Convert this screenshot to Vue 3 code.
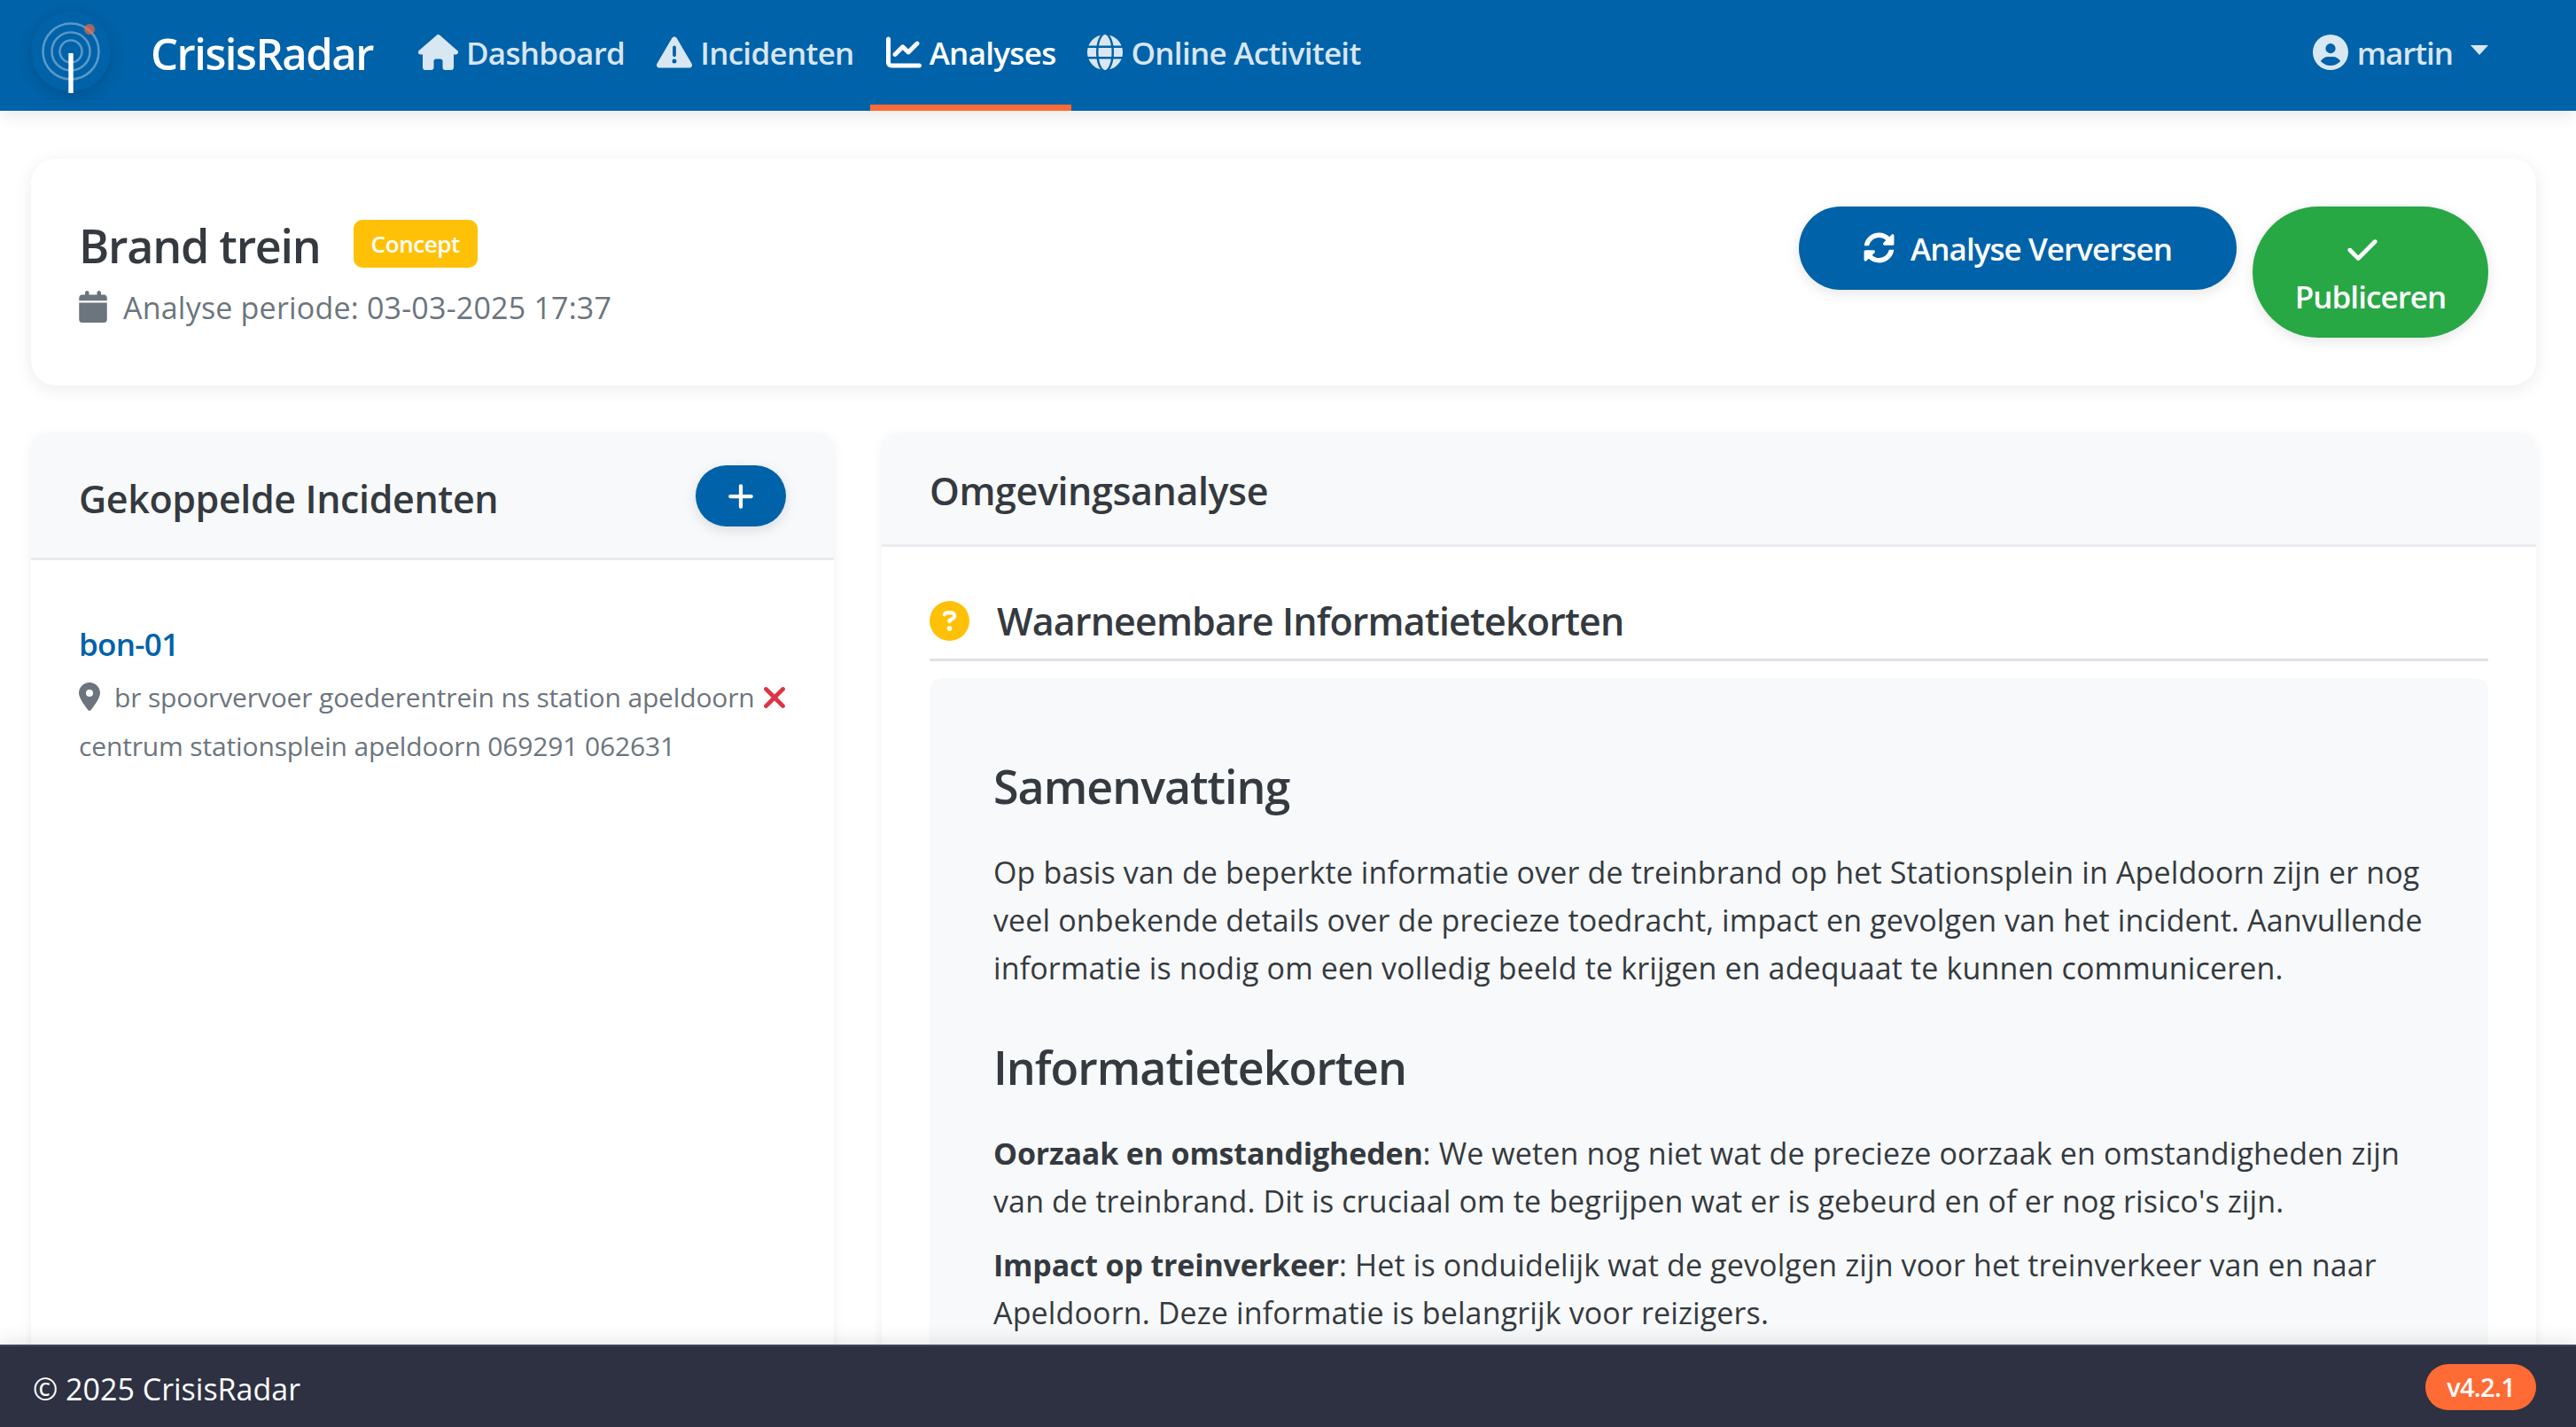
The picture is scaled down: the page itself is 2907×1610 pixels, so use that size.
<template>
  <div class="app">
    <!-- Navbar -->
    <header class="navbar">
      <svg class="logo" viewBox="0 0 90 90">
        <circle cx="45" cy="45" r="45" fill="#0062a8" />
        <circle cx="45" cy="45" r="31.5" class="ring" />
        <circle cx="45" cy="45" r="21.5" class="ring" />
        <circle cx="45" cy="45" r="12.5" class="ring" />
        <circle cx="66" cy="20" r="6" fill="#ff6b35" opacity="0.65" />
        <rect x="42.3" y="47" width="5.4" height="45" fill="#fff" />
      </svg>
      <span class="brand">CrisisRadar</span>
      <nav class="nav-links">
        <a
          v-for="item in navItems"
          :key="item.label"
          class="nav-link"
          :class="{ active: item.active }"
        >
          <svg class="nav-icon" :viewBox="item.box"><path :d="item.d" /></svg>
          {{ item.label }}
        </a>
      </nav>
      <div class="user">
        <svg class="user-icon" viewBox="0 0 512 512"><path :d="icons.user" /></svg>
        <span>martin</span>
        <span class="caret"></span>
      </div>
    </header>

    <main class="content">
      <!-- Analyse header -->
      <section class="head-card">
        <div>
          <div class="title-row">
            <h1 class="page-title">Brand trein</h1>
            <span class="badge">Concept</span>
          </div>
          <div class="period">
            <svg class="cal-icon" viewBox="0 0 448 512"><path :d="icons.calendar" /></svg>
            <span>Analyse periode: 03-03-2025 17:37</span>
          </div>
        </div>
        <div class="actions">
          <button class="btn btn-blue">
            <svg class="sync-icon" viewBox="0 0 512 512"><path :d="icons.sync" /></svg>
            Analyse Verversen
          </button>
          <button class="btn btn-green">
            <svg class="check-icon" viewBox="0 0 448 512"><path :d="icons.check" /></svg>
            <span>Publiceren</span>
          </button>
        </div>
      </section>

      <div class="columns">
        <!-- Incidenten -->
        <section class="card">
          <div class="card-head left-head">
            <h2 class="card-title">Gekoppelde Incidenten</h2>
            <button class="add-btn">
              <svg viewBox="0 0 448 512"><path :d="icons.plus" /></svg>
            </button>
          </div>
          <div class="incident">
            <a class="incident-link">bon-01</a>
            <div class="incident-line">
              <svg class="pin-icon" viewBox="0 0 384 512"><path :d="icons.pin" /></svg>
              <span>br spoorvervoer goederentrein ns station apeldoorn</span>
              <svg class="x-icon" viewBox="32 96 320 320"><path :d="icons.xmark" /></svg>
            </div>
            <div class="incident-line">
              <span>centrum stationsplein apeldoorn 069291 062631</span>
            </div>
          </div>
        </section>

        <!-- Omgevingsanalyse -->
        <section class="card">
          <div class="card-head right-head">
            <h2 class="card-title">Omgevingsanalyse</h2>
          </div>
          <div class="analysis">
            <div class="section-title">
              <svg class="q-icon" viewBox="0 0 512 512"><path :d="icons.question" /></svg>
              <h3>Waarneembare Informatietekorten</h3>
            </div>
            <div class="report">
              <h4>Samenvatting</h4>
              <p>
                Op basis van de beperkte informatie over de treinbrand op het Stationsplein in Apeldoorn zijn er nog
                veel onbekende details over de precieze toedracht, impact en gevolgen van het incident. Aanvullende
                informatie is nodig om een volledig beeld te krijgen en adequaat te kunnen communiceren.
              </p>
              <h4 class="second">Informatietekorten</h4>
              <p v-for="gap in gaps" :key="gap.title" class="gap">
                <strong>{{ gap.title }}</strong><span>: {{ gap.first }}</span><br />
                <span>{{ gap.rest }}</span>
              </p>
            </div>
          </div>
        </section>
      </div>
    </main>

    <footer class="footer">
      <span>© 2025 CrisisRadar</span>
      <span class="version">v4.2.1</span>
    </footer>
  </div>
</template>

<script setup>
  const icons = {
    house: 'M575.8 255.5c0 18-15 32.1-32 32.1h-32l.7 160.2c0 2.7-.2 5.4-.5 8.1V472c0 22.1-17.9 40-40 40H456c-1.1 0-2.2 0-3.3-.1c-1.4 .1-2.8 .1-4.2 .1H416 392c-22.1 0-40-17.9-40-40V448 384c0-17.7-14.3-32-32-32H256c-17.7 0-32 14.3-32 32v64 24c0 22.1-17.9 40-40 40H160 128.1c-1.5 0-3-.1-4.5-.2c-1.2 .1-2.4 .2-3.6 .2H104c-22.1 0-40-17.9-40-40V360c0-.9 0-1.9 .1-2.8V287.6H32c-18 0-32-14-32-32.1c0-9 3-17 10-24L266.4 8c7-7 15-8 22-8s15 2 21 7L564.8 231.5c8 7 12 15 11 24z',
    warning: 'M256 32c14.2 0 27.3 7.5 34.5 19.8l216 368c7.3 12.4 7.3 27.7 .2 40.1S486.3 480 472 480H40c-14.3 0-27.6-7.7-34.7-20.1s-7-27.8 .2-40.1l216-368C228.7 39.5 241.8 32 256 32zm0 128c-13.3 0-24 10.7-24 24V296c0 13.3 10.7 24 24 24s24-10.7 24-24V184c0-13.3-10.7-24-24-24zm32 224a32 32 0 1 0 -64 0 32 32 0 1 0 64 0z',
    chart: 'M64 64c0-17.7-14.3-32-32-32S0 46.3 0 64V400c0 44.2 35.8 80 80 80H480c17.7 0 32-14.3 32-32s-14.3-32-32-32H80c-8.8 0-16-7.2-16-16V64zm406.6 86.6c12.5-12.5 12.5-32.8 0-45.3s-32.8-12.5-45.3 0L320 210.7l-57.4-57.4c-12.5-12.5-32.8-12.5-45.3 0l-112 112c-12.5 12.5-12.5 32.8 0 45.3s32.8 12.5 45.3 0L240 221.3l57.4 57.4c12.5 12.5 32.8 12.5 45.3 0l128-128z',
    globe: 'M352 256c0 22.2-1.2 43.6-3.3 64H163.3c-2.2-20.4-3.3-41.8-3.3-64s1.2-43.6 3.3-64H348.7c2.2 20.4 3.3 41.8 3.3 64zm28.8-64H503.9c5.3 20.5 8.1 41.9 8.1 64s-2.8 43.5-8.1 64H380.8c2.1-20.6 3.2-42 3.2-64s-1.1-43.4-3.2-64zm112.6-32H376.7c-10-63.9-29.8-117.4-55.3-151.6c78.3 20.7 142 77.5 171.9 151.6zm-149.1 0H167.7c6.1-36.4 15.5-68.6 27-94.7c10.5-23.6 22.2-40.7 33.5-51.5C239.4 3.2 248.7 0 256 0s16.6 3.2 27.8 13.8c11.3 10.8 23 27.9 33.5 51.5c11.6 26 20.9 58.2 27 94.7zm-209 0H18.6C48.6 85.9 112.2 29.1 190.6 8.4C165.1 42.6 145.3 96.1 135.3 160zM8.1 192H131.2c-2.1 20.6-3.2 42-3.2 64s1.1 43.4 3.2 64H8.1C2.8 299.5 0 278.1 0 256s2.8-43.5 8.1-64zM194.7 446.6c-11.6-26-20.9-58.2-27-94.6H344.3c-6.1 36.4-15.5 68.6-27 94.6c-10.5 23.6-22.2 40.7-33.5 51.5C272.6 508.8 263.3 512 256 512s-16.6-3.2-27.8-13.8c-11.3-10.8-23-27.9-33.5-51.5zM135.3 352c10 63.9 29.8 117.4 55.3 151.6C112.2 482.9 48.6 426.1 18.6 352H135.3zm358.1 0c-30 74.1-93.6 130.9-171.9 151.6c25.5-34.2 45.2-87.7 55.3-151.6H493.4z',
    user: 'M399 384.2C376.9 345.8 335.4 320 288 320H224c-47.4 0-88.9 25.8-111 64.2c35.2 39.2 86.2 63.8 143 63.8s107.8-24.7 143-63.8zM0 256a256 256 0 1 1 512 0A256 256 0 1 1 0 256zm256 16a72 72 0 1 0 0-144 72 72 0 1 0 0 144z',
    calendar: 'M96 32V64H48C21.5 64 0 85.5 0 112v48H448V112c0-26.5-21.5-48-48-48H352V32c0-17.7-14.3-32-32-32s-32 14.3-32 32V64H160V32c0-17.7-14.3-32-32-32S96 14.3 96 32zM448 192H0V464c0 26.5 21.5 48 48 48H400c26.5 0 48-21.5 48-48V192z',
    sync: 'M370.72 133.28C339.458 104.008 298.888 87.962 255.848 88c-77.458.068-144.328 53.178-162.791 126.85-1.344 5.363-6.122 9.15-11.651 9.15H24.103c-7.498 0-13.194-6.807-11.807-14.176C33.933 94.924 134.813 8 256 8c66.448 0 126.791 26.136 171.315 68.685L463.03 40.97C478.149 25.851 504 36.559 504 57.941V192c0 13.255-10.745 24-24 24H345.941c-21.382 0-32.09-25.851-16.971-40.971l41.75-41.749zM32 296h134.059c21.382 0 32.09 25.851 16.971 40.971l-41.75 41.75c31.262 29.273 71.835 45.319 114.876 45.28 77.418-.07 144.315-53.144 162.787-126.849 1.344-5.363 6.122-9.15 11.651-9.15h57.304c7.498 0 13.194 6.807 11.807 14.176C478.067 417.076 377.187 504 256 504c-66.448 0-126.791-26.136-171.315-68.685L48.97 471.03C33.851 486.149 8 475.441 8 454.059V320c0-13.255 10.745-24 24-24z',
    check: 'M438.6 105.4c12.5 12.5 12.5 32.8 0 45.3l-256 256c-12.5 12.5-32.8 12.5-45.3 0l-128-128c-12.5-12.5-12.5-32.8 0-45.3s32.8-12.5 45.3 0L160 338.7 393.4 105.4c12.5-12.5 32.8-12.5 45.3 0z',
    plus: 'M256 80c0-17.7-14.3-32-32-32s-32 14.3-32 32V224H48c-17.7 0-32 14.3-32 32s14.3 32 32 32H192V432c0 17.7 14.3 32 32 32s32-14.3 32-32V288H400c17.7 0 32-14.3 32-32s-14.3-32-32-32H256V80z',
    xmark: 'M342.6 150.6c12.5-12.5 12.5-32.8 0-45.3s-32.8-12.5-45.3 0L192 210.7 86.6 105.4c-12.5-12.5-32.8-12.5-45.3 0s-12.5 32.8 0 45.3L146.7 256 41.4 361.4c-12.5 12.5-12.5 32.8 0 45.3s32.8 12.5 45.3 0L192 301.3 297.4 406.6c12.5 12.5 32.8 12.5 45.3 0s12.5-32.8 0-45.3L237.3 256 342.6 150.6z',
    pin: 'M215.7 499.2C267 435 384 279.4 384 192C384 86 298 0 192 0S0 86 0 192c0 87.4 117 243 168.3 307.2c12.3 15.3 35.1 15.3 47.4 0zM192 256a64 64 0 1 1 0-128 64 64 0 1 1 0 128z',
    question: 'M256 512A256 256 0 1 0 256 0a256 256 0 1 0 0 512zM169.8 165.3c7.9-22.3 29.1-37.3 52.8-37.3h58.3c34.9 0 63.1 28.3 63.1 63.1c0 22.6-12.1 43.5-31.7 54.8L280 264.4c-.2 13-10.9 23.6-24 23.6c-13.3 0-24-10.7-24-24V250.5c0-8.6 4.6-16.5 12.1-20.8l44.3-25.4c4.7-2.7 7.6-7.7 7.6-13.1c0-8.4-6.8-15.1-15.1-15.1H222.6c-3.4 0-6.4 2.1-7.5 5.3l-.4 1.2c-4.4 12.5-18.2 19-30.6 14.6s-19-18.2-14.6-30.6l.4-1.2zM224 352a32 32 0 1 1 64 0 32 32 0 1 1 -64 0z'
  }

  const navItems = [
    { label: 'Dashboard', d: icons.house, box: '0 0 576 512' },
    { label: 'Incidenten', d: icons.warning, box: '0 0 512 512' },
    { label: 'Analyses', d: icons.chart, box: '0 0 512 512', active: true },
    { label: 'Online Activiteit', d: icons.globe, box: '0 0 512 512' }
  ]

  const gaps = [
    {
      title: 'Oorzaak en omstandigheden',
      first: 'We weten nog niet wat de precieze oorzaak en omstandigheden zijn',
      rest: "van de treinbrand. Dit is cruciaal om te begrijpen wat er is gebeurd en of er nog risico's zijn."
    },
    {
      title: 'Impact op treinverkeer',
      first: 'Het is onduidelijk wat de gevolgen zijn voor het treinverkeer van en naar',
      rest: 'Apeldoorn. Deze informatie is belangrijk voor reizigers.'
    }
  ]
</script>

<style>
  html, body {
    margin: 0;
    background: #fff;
  }
</style>

<style scoped>
  .app {
    display: flex;
    flex-direction: column;
    height: 100vh;
    overflow: hidden;
    font-family: 'Open Sans', 'Liberation Sans', sans-serif;
    letter-spacing: -0.025em;
    color: #343a40;
  }

  /* Navbar */
  .navbar {
    position: relative;
    z-index: 2;
    flex: none;
    display: flex;
    align-items: center;
    height: 125px;
    padding: 0 99px 0 35px;
    background: #0062a8;
    box-shadow: 0 4px 20px rgba(0, 0, 0, 0.1);
  }
  .logo {
    width: 90px;
    height: 90px;
    flex: none;
    overflow: visible;
    filter: drop-shadow(0 5px 8px rgba(0, 0, 0, 0.15));
    margin-top: -9px;
  }
  .ring {
    fill: none;
    stroke: rgba(255, 255, 255, 0.35);
    stroke-width: 2.6;
  }
  .brand {
    margin: -6px 33px 0 45px;
    font-size: 49px;
    font-weight: 600;
    letter-spacing: -0.03em;
    color: #fff;
  }
  .nav-links {
    display: flex;
    align-self: stretch;
    flex: 1;
  }
  .nav-link {
    display: flex;
    align-items: center;
    gap: 9px;
    padding: 0 18px;
    font-size: 35px;
    font-weight: 600;
    letter-spacing: -0.02em;
    color: rgba(255, 255, 255, 0.85);
    border-bottom: 7px solid transparent;
  }
  .nav-link.active {
    color: #fff;
    border-bottom-color: #ff6b35;
  }
  .nav-icon {
    height: 40px;
    fill: currentColor;
  }
  .user {
    display: flex;
    align-items: center;
    gap: 10px;
    margin-bottom: 7px;
    font-size: 35px;
    font-weight: 600;
    letter-spacing: -0.03em;
    color: rgba(255, 255, 255, 0.85);
  }
  .user-icon {
    width: 40px;
    height: 40px;
    fill: currentColor;
  }
  .caret {
    margin-left: 10px;
    margin-top: -6px;
    border-top: 11px solid currentColor;
    border-left: 10px solid transparent;
    border-right: 10px solid transparent;
  }

  /* Page */
  .content {
    flex: 1;
    min-height: 0;
    overflow: hidden;
    padding: 54px 45px 0 35px;
  }
  .head-card {
    display: flex;
    justify-content: space-between;
    align-items: flex-start;
    height: 256px;
    box-sizing: border-box;
    padding: 54px 54px 0 54px;
    background: #fff;
    border-radius: 28px;
    box-shadow: 0 4px 20px rgba(0, 0, 0, 0.08);
  }
  .title-row {
    display: flex;
    align-items: center;
    gap: 37px;
    padding-top: 6px;
  }
  .page-title {
    margin: 0;
    font-size: 52px;
    font-weight: 600;
    line-height: 76px;
    letter-spacing: -0.024em;
    color: #343a40;
  }
  .badge {
    padding: 0 20px;
    line-height: 54px;
    font-size: 26px;
    font-weight: 600;
    color: #fff;
    background: #ffc107;
    border-radius: 10px;
    margin-top: -4px;
  }
  .period {
    display: flex;
    align-items: center;
    gap: 18px;
    margin-top: 9px;
    font-size: 34px;
    letter-spacing: 0.006em;
    color: #6c757d;
  }
  .cal-icon {
    width: 32px;
    height: 36px;
    fill: currentColor;
    margin-top: -2px;
  }
  .actions {
    display: flex;
    align-items: flex-start;
    gap: 18px;
  }
  .btn {
    border: 0;
    border-radius: 999px;
    font-family: inherit;
    font-size: 35px;
    font-weight: 600;
    letter-spacing: -0.027em;
    color: #fff;
    box-shadow: 0 4px 15px rgba(0, 0, 0, 0.1);
  }
  .btn-blue {
    display: flex;
    align-items: center;
    justify-content: center;
    gap: 18px;
    width: 494px;
    height: 94px;
    padding-top: 2px;
    background: #0062a8;
  }
  .sync-icon {
    width: 35px;
    height: 35px;
    fill: #fff;
    margin-top: -2px;
  }
  .btn-green {
    display: flex;
    flex-direction: column;
    align-items: center;
    width: 266px;
    height: 148px;
    padding-top: 30px;
    background: #28a745;
  }
  .check-icon {
    width: 38px;
    height: 38px;
    fill: #fff;
    margin: 0 18px 10px 0;
  }

  .columns {
    display: grid;
    grid-template-columns: 906px 1fr;
    gap: 54px;
    margin-top: 54px;
  }
  .card {
    background: #fff;
    border-radius: 18px 18px 0 0;
    box-shadow: 0 2px 14px rgba(0, 0, 0, 0.06);
    min-height: 1200px;
  }
  .card-head {
    display: flex;
    align-items: center;
    justify-content: space-between;
    box-sizing: border-box;
    padding: 0 54px;
    background: #f8f9fa;
    border-bottom: 3px solid #e9ecef;
    border-radius: 18px 18px 0 0;
  }
  .left-head {
    height: 143px;
    padding-top: 6px;
  }
  .right-head {
    height: 128px;
    padding-top: 4px;
  }
  .card-title {
    margin: 0;
    font-size: 43px;
    font-weight: 600;
    color: #343a40;
  }
  .add-btn {
    display: flex;
    align-items: center;
    justify-content: center;
    width: 102px;
    height: 69px;
    border: 0;
    border-radius: 999px;
    background: #0062a8;
    box-shadow: 0 4px 15px rgba(0, 0, 0, 0.12);
    margin-top: -5px;
  }
  .add-btn svg {
    width: 30px;
    height: 34px;
    fill: #fff;
  }

  .incident {
    padding: 70px 55px 0 54px;
  }
  .incident-link {
    display: block;
    margin-bottom: 7px;
    font-size: 35px;
    font-weight: 600;
    line-height: 50px;
    letter-spacing: -0.02em;
    color: #0062a8;
  }
  .incident-line {
    display: flex;
    align-items: center;
    height: 55px;
    font-size: 30px;
    letter-spacing: -0.005em;
    white-space: nowrap;
    color: #6c757d;
  }
  .pin-icon {
    flex: none;
    width: 24px;
    height: 32px;
    fill: currentColor;
    margin: -2px 16px 0 0;
  }
  .x-icon {
    flex: none;
    width: 24px;
    height: 24px;
    fill: #dc3545;
    margin-left: auto;
  }

  .analysis {
    padding: 58px 54px 0;
  }
  .section-title {
    display: flex;
    align-items: center;
    gap: 31px;
    height: 68px;
    padding-bottom: 0;
    border-bottom: 3px solid #dee2e6;
  }
  .q-icon {
    width: 45px;
    height: 45px;
    fill: #ffc107;
    margin-top: -18px;
  }
  .section-title h3 {
    margin: -18px 0 0;
    font-size: 43px;
    font-weight: 600;
    letter-spacing: -0.02em;
    color: #343a40;
  }
  .report {
    margin-top: 19px;
    padding: 90px 72px 120px;
    background: #f8f9fa;
    border-radius: 14px;
    font-size: 34px;
    line-height: 54px;
    letter-spacing: 0.004em;
  }
  .report h4 {
    margin: 0 0 38px;
    font-size: 52px;
    font-weight: 600;
    line-height: 64px;
    letter-spacing: -0.02em;
    color: #343a40;
  }
  .report h4.second {
    margin-top: 53px;
  }
  .report p {
    margin: 0;
  }
  .report p.gap {
    margin-bottom: 18px;
  }
  .report strong {
    font-weight: 700;
    letter-spacing: -0.005em;
  }

  /* Footer */
  .footer {
    position: relative;
    z-index: 2;
    flex: none;
    display: flex;
    align-items: center;
    justify-content: space-between;
    box-sizing: border-box;
    height: 93px;
    padding: 4px 45px 0 37px;
    background: #2d3142;
    border-top: 2px solid #3f4456;
    box-shadow: 0 -4px 20px rgba(0, 0, 0, 0.1);
    font-size: 34px;
    letter-spacing: 0;
    color: #fff;
  }
  .version {
    display: block;
    padding: 0 24px;
    line-height: 52px;
    font-size: 29px;
    font-weight: 600;
    letter-spacing: -0.025em;
    background: #ff6b35;
    border-radius: 26px;
    margin-top: -4px;
  }
</style>
